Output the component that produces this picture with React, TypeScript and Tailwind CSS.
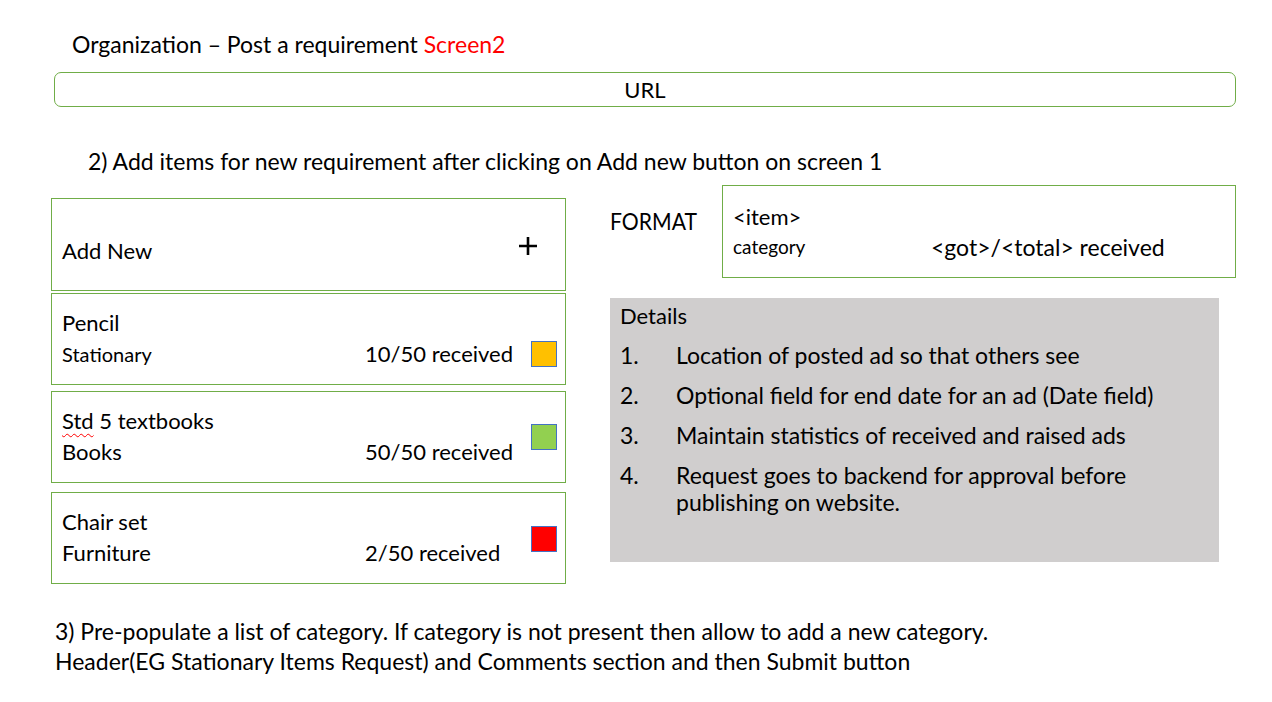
import React from "react";

interface Item {
  name: string;
  category: string;
  got: number;
  total: number;
  color: string;
  top: string;
  square: string;
}

const items: Item[] = [
  { name: "Pencil", category: "Stationary", got: 10, total: 50, color: "bg-[#ffc000]", top: "mt-[2px]", square: "mt-[30px]" },
  { name: "Std 5 textbooks", category: "Books", got: 50, total: 50, color: "bg-[#92d050]", top: "mt-[6px]", square: "" },
  { name: "Chair set", category: "Furniture", got: 2, total: 50, color: "bg-[#ff0000]", top: "mt-[9px]", square: "mt-[2px]" },
];

const details = [
  "Location of posted ad so that others see",
  "Optional field for end date for an ad (Date field)",
  "Maintain statistics of received and raised ads",
  "Request goes to backend for approval before publishing on website.",
];

export default function App() {
  return (
    <div
      className="w-[1272px] h-[702px] bg-white text-black overflow-hidden"
      style={{ fontFamily: "Lato, 'Open Sans', sans-serif" }}
    >
      {/* Title */}
      <div className="pl-[72px] pt-[30px] text-[23px] leading-[28px]">
        Organization – Post a requirement <span className="text-[#ff0000]">Screen2</span>
      </div>

      {/* URL bar */}
      <div className="ml-[54px] w-[1182px] mt-[14px] h-[35px] border border-[#70ad47] rounded-[7px] flex items-center justify-center text-[22px]">
        URL
      </div>

      <div className="pl-[88px] mt-[40px] text-[23px] leading-[28px]">
        2) Add items for new requirement after clicking on Add new button on screen 1
      </div>

      <div className="flex mt-[10px]">
        {/* Left list */}
        <div className="ml-[51px] w-[515px] pt-[13px]">
          <div className="h-[93px] border border-[#70ad47] flex items-center justify-between pl-[10px] pr-[27px] pt-[12px]">
            <span className="text-[22px]">Add New</span>
            <svg width="20" height="20" viewBox="0 0 20 20" className="-mt-[10px]">
              <path d="M10 1v18M1 10h18" stroke="#000" strokeWidth="2.6" />
            </svg>
          </div>
          {items.map((it) => (
            <div
              key={it.name}
              className={`${it.top} h-[92px] border border-[#70ad47] flex items-center pl-[10px] pr-[8px]`}
            >
              <div className="flex-1">
                <div className="text-[22px] leading-[30px]">
                  {it.name === "Std 5 textbooks" ? (
                    <>
                      <span className="underline decoration-wavy decoration-[#ff0000] decoration-1 underline-offset-4">Std</span> 5 textbooks
                    </>
                  ) : (
                    it.name
                  )}
                </div>
                <div className="flex items-center justify-between pr-[16px]">
                  <span className={it.name === "Pencil" ? "text-[20px] leading-[32px]" : "text-[22px] leading-[32px]"}>
                    {it.category}
                  </span>
                  <span className="text-[22px] leading-[32px] w-[150px]">
                    {it.got}/{it.total} received
                  </span>
                </div>
              </div>
              <div className={`w-[26px] h-[26px] border border-[#4472c4] ${it.color} ${it.square}`} />
            </div>
          ))}
        </div>

        {/* Right side */}
        <div className="ml-[44px] w-[626px]">
          <div className="flex">
            <div className="w-[112px] pt-[19px] text-[23px] origin-left scale-x-[0.92]">FORMAT</div>
            <div className="w-[514px] h-[93px] border border-[#70ad47] pl-[10px] pt-[17px]">
              <div className="text-[22px] leading-[28px]">&lt;item&gt;</div>
              <div className="flex items-center">
                <span className="w-[198px] text-[19px] leading-[32px]">category</span>
                <span className="text-[23px] leading-[32px]">&lt;got&gt;/&lt;total&gt; received</span>
              </div>
            </div>
          </div>

          <div className="mt-[20px] w-[609px] h-[264px] bg-[#d0cece] px-[10px] pt-[4px]">
            <div className="text-[22px] leading-[28px]">Details</div>
            <ol className="mt-[12px]">
              {details.map((d, i) => (
                <li key={i} className="flex text-[23px] leading-[27px] mb-[13px]">
                  <span className="w-[56px] shrink-0">{i + 1}.</span>
                  <span className="w-[480px]">{d}</span>
                </li>
              ))}
            </ol>
          </div>
        </div>
      </div>

      <div className="pl-[55px] mt-[32px] text-[23px] leading-[30px]">
        <div>3) Pre-populate a list of category. If category is not present then allow to add a new category.</div>
        <div>Header(EG Stationary Items Request) and Comments section and then Submit button</div>
      </div>
    </div>
  );
}
